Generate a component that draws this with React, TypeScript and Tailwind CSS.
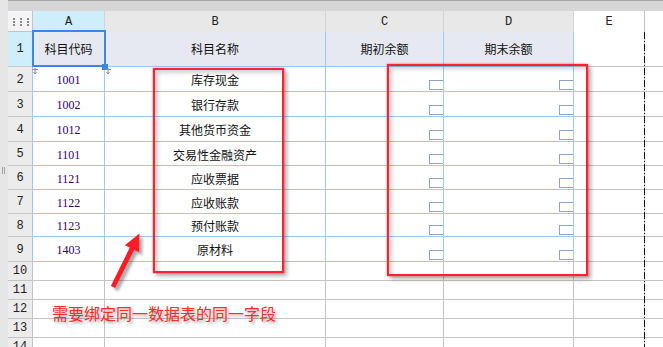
import React from "react";

const CJK = "font-['Noto_Sans_CJK_SC','Noto_Sans',sans-serif]";
const MONO = "font-['Liberation_Mono',monospace]";

const accounts = [
  { code: "1001", name: "库存现金" },
  { code: "1002", name: "银行存款" },
  { code: "1012", name: "其他货币资金" },
  { code: "1101", name: "交易性金融资产" },
  { code: "1121", name: "应收票据" },
  { code: "1122", name: "应收账款" },
  { code: "1123", name: "预付账款" },
  { code: "1403", name: "原材料" },
];

const blue = "border-[#9ecbf5]";
const gray = "border-[#c4c4c4]";

// empty bound-field marker drawn at the bottom right of the amount cells
const FieldBox = () => (
  <div className="flex h-full w-full items-end justify-end pb-[1px]">
    <div className="h-[10px] w-[14px] border border-r-0 border-[#8ea3c7] bg-white" />
  </div>
);

const CornerDots = () => (
  <div className="grid grid-cols-3 gap-x-[2px] gap-y-[1px] pl-[5px] pt-[7px]">
    {Array.from({ length: 9 }).map((_, i) => (
      <span key={i} className="h-[2px] w-[2px] bg-[#8a8a8a]" />
    ))}
  </div>
);

const FillMark = () => (
  <svg width="6" height="6" viewBox="0 0 6 6">
    <path d="M0 1.5H6M3 0V6M1.5 4L3 6L4.5 4" stroke="#8c8c8c" strokeWidth="1" fill="none" />
  </svg>
);

function HeaderRow() {
  return (
    <>
      <div className={`border-r border-b ${gray} bg-[#f4f4f6]`}>
        <CornerDots />
      </div>
      <div className={`flex items-center justify-center border-r border-[#d4d4d4] bg-[#cdeefa] text-[12px] text-[#222] ${MONO}`}>A</div>
      <div className={`flex items-center justify-center border-r border-[#d4d4d4] bg-[#e8e8e8] text-[12px] text-[#222] ${MONO}`}>B</div>
      <div className={`flex items-center justify-center border-r border-[#d4d4d4] bg-[#e8e8e8] text-[12px] text-[#222] ${MONO}`}>C</div>
      <div className={`flex items-center justify-center border-r border-[#d4d4d4] bg-[#e8e8e8] text-[12px] text-[#222] ${MONO}`}>D</div>
      <div className={`flex items-center justify-center border-r ${gray} bg-white text-[12px] text-[#222] ${MONO}`}>E</div>
      <div className="bg-white" />
    </>
  );
}

function TitleRow() {
  const cell = `flex items-center justify-center border-r border-b ${blue} bg-[#e6e9f2] text-[12px] text-[#111] ${CJK}`;
  return (
    <>
      <div className={`flex items-center justify-center border-r border-b border-r-[#9ecbf5] border-b-[#c8c8c8] bg-[#cdeefa] text-[12px] text-[#222] ${MONO}`}>1</div>
      <div className={cell}>科目代码</div>
      <div className={cell}>科目名称</div>
      <div className={cell}>期初余额</div>
      <div className={cell}>期末余额</div>
      <div className={`border-r border-b ${gray}`} />
      <div className={`border-b ${gray}`} />
    </>
  );
}

function DataRow({ n, code, name }: { n: number; code: string; name: string }) {
  const cell = `border-r border-b ${blue}`;
  return (
    <>
      <div className={`flex items-center justify-center pt-[1px] border-r border-b border-r-[#9ecbf5] border-b-[#c8c8c8] bg-[#ececec] text-[12px] text-[#222] ${MONO}`}>{n}</div>
      <div className={`${cell} flex items-center justify-center pt-[2px] text-[12px] text-[#330066] font-['Liberation_Serif',serif]`}>{code}</div>
      <div className={`${cell} flex items-center justify-center pt-[2px] text-[12px] text-[#111] ${CJK}`}>{name}</div>
      <div className={cell}>
        <FieldBox />
      </div>
      <div className={cell}>
        <FieldBox />
      </div>
      <div className={`border-r border-b ${gray}`} />
      <div className={`border-b ${gray}`} />
    </>
  );
}

function EmptyRow({ n }: { n: number }) {
  const cell = `border-r border-b ${gray}`;
  return (
    <>
      <div className={`flex items-center justify-center border-r border-b ${gray} bg-[#ececec] text-[12px] text-[#222] ${MONO}`}>{n}</div>
      <div className={cell} />
      <div className={cell} />
      <div className={cell} />
      <div className={cell} />
      <div className={cell} />
      <div className={`border-b ${gray}`} />
    </>
  );
}

// red call-out frame with a soft drop shadow
const Callout = ({ className }: { className: string }) => (
  <div
    className={`absolute border-2 border-[#ff2232] shadow-[0_0_2px_rgba(255,0,0,0.6),3px_3px_4px_rgba(0,0,0,0.3),inset_3px_3px_4px_rgba(0,0,0,0.18)] ${className}`}
  />
);

const Arrow = () => (
  <svg className="absolute left-[100px] top-[225px]" width="60" height="70" viewBox="0 0 60 70">
    <defs>
      <filter id="arrowShadow" x="-30%" y="-30%" width="160%" height="160%">
        <feDropShadow dx="3" dy="3" stdDeviation="1.6" floodColor="#000" floodOpacity="0.35" />
      </filter>
    </defs>
    <polygon
      points="39.5,8.5 24.8,20.2 29.8,22.6 10.8,60.9 15.2,63.1 34.2,24.9 39.2,27.3"
      fill="#ff1f26"
      filter="url(#arrowShadow)"
    />
  </svg>
);

export default function App() {
  return (
    <div className="relative flex h-[347px] w-[663px] overflow-hidden bg-white">
      {/* left gutter */}
      <div className="relative w-[8px] shrink-0 bg-[#e6e6e6]">
        <div className="absolute left-[2px] top-[167px] h-[7px] w-[1px] bg-[#a0a0a0]" />
        <div className="absolute left-[4px] top-[167px] h-[7px] w-[1px] bg-[#a0a0a0]" />
      </div>

      <div className="flex flex-1 flex-col">
        <div className="h-[11px] shrink-0 border-t border-[#a6a6a6] bg-[#d6d6d6]" />
        <div className="grid grid-cols-[25px_72px_221px_118px_130px_71px_18px] grid-rows-[21px_35px_25px_25px_25px_24px_24px_24px_23px_25px_19px_19px_19px_19px_19px]">
          <HeaderRow />
          <TitleRow />
          {accounts.map((a, i) => (
            <DataRow key={a.code} n={i + 2} code={a.code} name={a.name} />
          ))}
          {[10, 11, 12, 13, 14].map((n) => (
            <EmptyRow key={n} n={n} />
          ))}
        </div>
      </div>

      {/* page break */}
      <svg className="absolute left-[644px] top-[32px]" width="1" height="315">
        <line x1="0.5" y1="0" x2="0.5" y2="315" stroke="#111" strokeWidth="1" strokeDasharray="7 2 1 2" />
      </svg>

      {/* active cell A1 */}
      <div className="absolute left-[32px] top-[30px] h-[37px] w-[74px] border-2 border-[#3a87e8]" />
      <div className="absolute left-[102px] top-[64px] h-[6px] w-[6px] bg-[#3a87e8]" />
      <div className="absolute left-[32px] top-[68px]">
        <FillMark />
      </div>
      <div className="absolute left-[105px] top-[68px]">
        <FillMark />
      </div>

      <Callout className="left-[153px] top-[68px] h-[205px] w-[131px]" />
      <Callout className="left-[387px] top-[64px] h-[212px] w-[201px]" />
      <Arrow />

      <div
        className={`absolute left-[52px] top-[305px] text-[16px] leading-[16px] text-[#ff2a2a] [text-shadow:2px_2px_3px_rgba(0,0,0,0.35)] ${CJK}`}
      >
        需要绑定同一数据表的同一字段
      </div>
    </div>
  );
}
